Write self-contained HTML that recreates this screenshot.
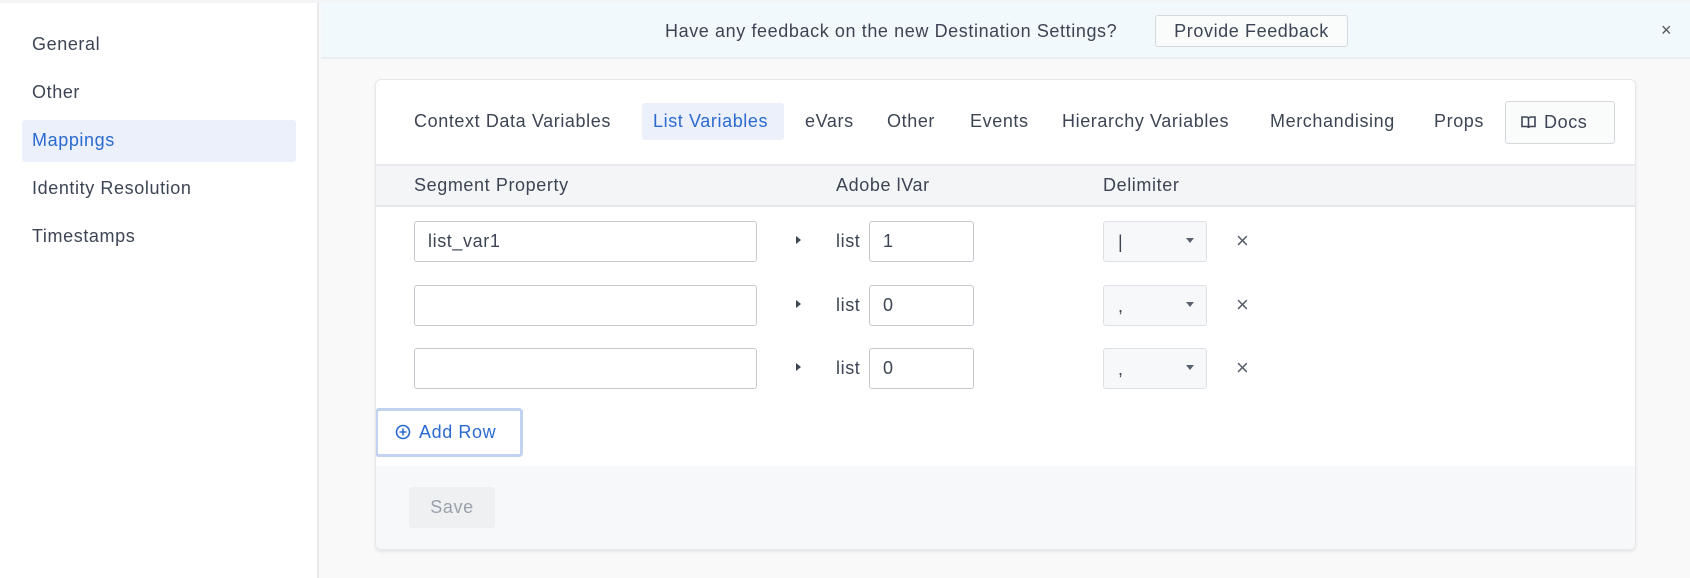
<!DOCTYPE html>
<html><head><style>
*{box-sizing:border-box;margin:0;padding:0}
body{width:1690px;height:578px;background:#f9f9fa;font-family:"Liberation Sans",sans-serif;color:#3d4554;position:relative;overflow:hidden;font-size:18px;letter-spacing:0.6px}
.abs{position:absolute}
.side{left:0;top:3px;width:319px;height:575px;background:#fff;border-right:2px solid #e6e8eb}
.si{position:absolute;left:32px;font-size:18px;color:#3d4554}
.banner{left:321px;top:3px;width:1369px;height:56px;background:#f2f9fc;border-bottom:2px solid #e8eef1}
.card{left:375px;top:79px;width:1261px;height:471px;background:#fff;border:1px solid #e6e8eb;border-radius:6px;box-shadow:0 2px 3px rgba(0,0,0,.08);overflow:hidden}
.tab{position:absolute;top:31px;font-size:18px;line-height:20px}
.inp{position:absolute;border:1px solid #c4c9d0;border-radius:3px;background:#fff;height:41px;font-size:18px;padding-left:13px;line-height:39px}
.sel{position:absolute;border:1px solid #dde0e4;border-radius:3px;background:#f7f8f9;height:41px;width:104px}
.x{position:absolute;font-size:22px;color:#5a6270}
</style></head><body>
<div class="abs" style="left:0;top:0;width:1690px;height:3px;background:#f3f4f5"></div>
<div class="abs side">
<div class="si" style="top:31px">General</div>
<div class="si" style="top:79px">Other</div>
<div class="abs" style="left:22px;top:117px;width:274px;height:42px;background:#ebf0fa;border-radius:3px"></div>
<div class="si" style="top:127px;color:#2b6ad1">Mappings</div>
<div class="si" style="top:175px">Identity Resolution</div>
<div class="si" style="top:223px">Timestamps</div>
</div>
<div class="abs banner">
<div class="abs" style="left:344px;top:18px;font-size:18px">Have any feedback on the new Destination Settings?</div>
<div class="abs" style="left:834px;top:12px;width:193px;height:32px;background:#fafbfb;border:1px solid #d5d9de;border-radius:3px;text-align:center;line-height:30px;font-size:18px">Provide Feedback</div>
<div class="abs" style="left:1340px;top:17px;font-size:18px;color:#555">×</div>
</div>
<div class="abs card">
<div class="tab" style="left:38px">Context Data Variables</div>
<div class="abs" style="left:266px;top:23px;width:142px;height:37px;background:#ebf0fa;border-radius:3px"></div>
<div class="tab" style="left:277px;color:#2b6ad1">List Variables</div>
<div class="tab" style="left:429px">eVars</div>
<div class="tab" style="left:511px">Other</div>
<div class="tab" style="left:594px">Events</div>
<div class="tab" style="left:686px">Hierarchy Variables</div>
<div class="tab" style="left:894px">Merchandising</div>
<div class="tab" style="left:1058px">Props</div>
<div class="abs" style="left:1129px;top:21px;width:110px;height:43px;border:1px solid #d5d9de;border-radius:3px;background:#fafbfb;font-size:18px;line-height:41px;padding-left:15px">
<svg width="15" height="14" viewBox="0 0 15 14" style="vertical-align:-1px;margin-right:8px"><path d="M1 2h4.5c1 0 2 .8 2 2v9c0-1-1-1.5-2-1.5H1zM14 2H9.5c-1 0-2 .8-2 2v9c0-1 1-1.5 2-1.5H14z" fill="none" stroke="#3d4554" stroke-width="1.6"/></svg>Docs</div>
<div class="abs" style="left:0;top:84px;width:1261px;height:43px;background:#f4f5f7;border-top:2px solid #e6e8eb;border-bottom:2px solid #e6e8eb"></div>
<div class="tab" style="left:38px;top:95px">Segment Property</div>
<div class="tab" style="left:460px;top:95px">Adobe lVar</div>
<div class="tab" style="left:727px;top:95px">Delimiter</div>

<div class="inp" style="left:38px;top:141px;width:343px">list_var1</div>
<div class="abs" style="left:420px;top:156px;width:0;height:0;border-left:5px solid #3d4554;border-top:4px solid transparent;border-bottom:4px solid transparent"></div>
<div class="abs" style="left:460px;top:151px">list</div>
<div class="inp" style="left:493px;top:141px;width:105px">1</div>
<div class="sel" style="left:727px;top:141px"><span class="abs" style="left:14px;top:10px">|</span><span class="abs" style="right:12px;top:16px;border-top:5px solid #5a6270;border-left:4px solid transparent;border-right:4px solid transparent"></span></div>
<div class="x" style="left:860px;top:148px">×</div>

<div class="inp" style="left:38px;top:205px;width:343px"></div>
<div class="abs" style="left:420px;top:220px;border-left:5px solid #3d4554;border-top:4px solid transparent;border-bottom:4px solid transparent"></div>
<div class="abs" style="left:460px;top:215px">list</div>
<div class="inp" style="left:493px;top:205px;width:105px">0</div>
<div class="sel" style="left:727px;top:205px"><span class="abs" style="left:14px;top:10px">,</span><span class="abs" style="right:12px;top:16px;border-top:5px solid #5a6270;border-left:4px solid transparent;border-right:4px solid transparent"></span></div>
<div class="x" style="left:860px;top:212px">×</div>

<div class="inp" style="left:38px;top:268px;width:343px"></div>
<div class="abs" style="left:420px;top:283px;border-left:5px solid #3d4554;border-top:4px solid transparent;border-bottom:4px solid transparent"></div>
<div class="abs" style="left:460px;top:278px">list</div>
<div class="inp" style="left:493px;top:268px;width:105px">0</div>
<div class="sel" style="left:727px;top:268px"><span class="abs" style="left:14px;top:10px">,</span><span class="abs" style="right:12px;top:16px;border-top:5px solid #5a6270;border-left:4px solid transparent;border-right:4px solid transparent"></span></div>
<div class="x" style="left:860px;top:275px">×</div>

<div class="abs" style="left:-1px;top:328px;width:148px;height:49px;border:3px solid #c2d3ef;border-radius:4px;background:#fff;color:#2b6ad1;font-size:18px;line-height:43px;padding-left:17px">
<svg width="16" height="16" viewBox="0 0 16 16" style="vertical-align:-2px;margin-right:8px"><circle cx="8" cy="8" r="6.5" fill="none" stroke="#2b6ad1" stroke-width="1.6"/><path d="M8 4.5v7M4.5 8h7" stroke="#2b6ad1" stroke-width="1.6"/></svg>Add Row</div>
<div class="abs" style="left:0;top:386px;width:1261px;height:85px;background:#f7f8fa"></div>
<div class="abs" style="left:33px;top:407px;width:86px;height:41px;background:#eef0f2;border-radius:3px;color:#9aa1ab;text-align:center;line-height:41px;font-size:18px">Save</div>
</div>
</body></html>
